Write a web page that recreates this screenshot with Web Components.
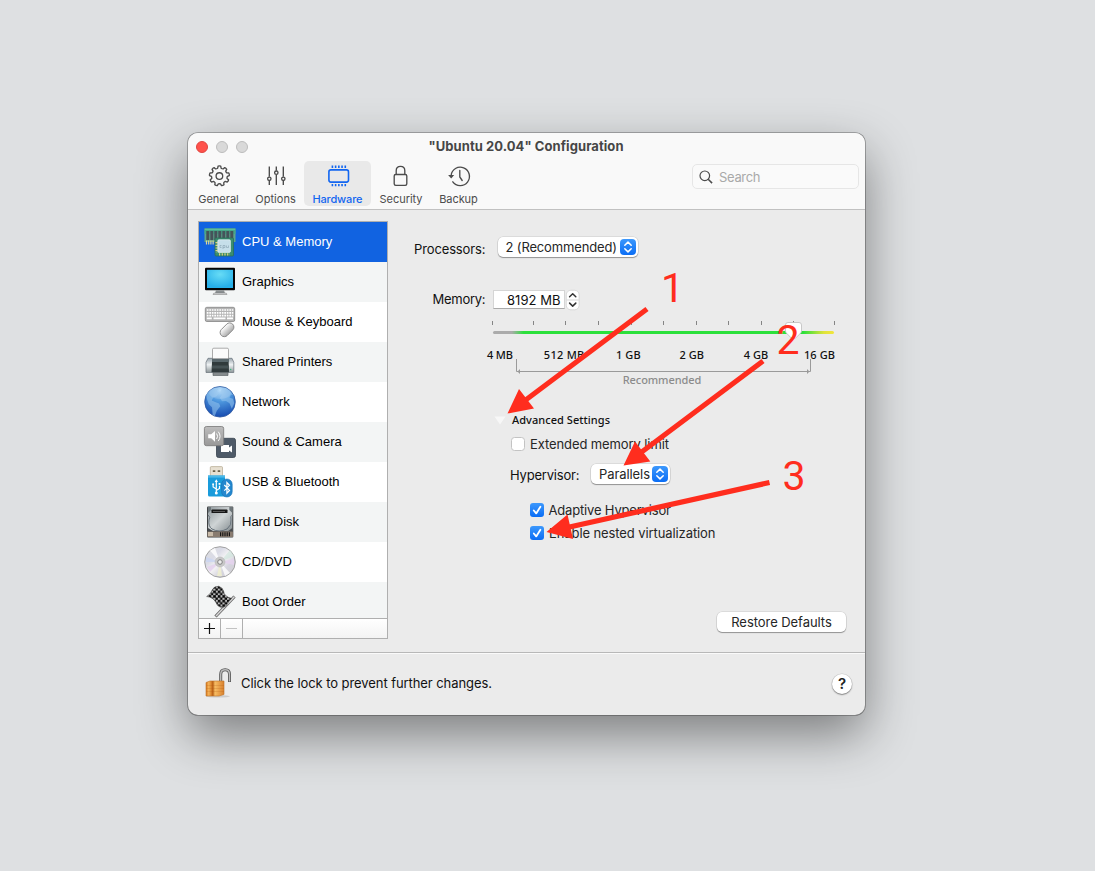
<!DOCTYPE html>
<html lang="en"><head><meta charset="utf-8"><title>"Ubuntu 20.04" Configuration</title>
<style>
html,body{margin:0;height:100%;overflow:hidden}
body{background:#dee0e2;font:13px/16px Inter,"Liberation Sans",sans-serif;color:#262626;position:relative}
</style></head><body>
<config-page></config-page>
<script>
function define(name, html, init){
  const t=document.createElement('template'); t.innerHTML=html;
  customElements.define(name, class extends HTMLElement{
    connectedCallback(){
      if(this.shadowRoot) return;
      this.attachShadow({mode:'open'}).append(t.content.cloneNode(true));
      if(init) init(this,this.shadowRoot);
    }
  });
}

const SIDE = {
cpu:`<path d="M.5 2.500h31v13.500H.5z" fill="#5fa58c"/><path d="M.5 2.500h31V8H.5z" fill="#46a687"/><path d="M3.800 5v9M7.800 5v9M11.800 5v9M15.800 5v9M19.800 5v9M23.800 5v9M27.800 5v9" stroke="#45535a" stroke-width="3"/><path d="M.8 3.300h30.400" stroke="#65c4a0"/><path d="M2.500 14.500v4M4.700 14.500v4M6.900 14.500v4M9.100 14.500v4" stroke="#dfd79b" stroke-width="1.200"/><rect x="11" y="12" width="18.500" height="18" rx="1" fill="#3b8e70" stroke="#2b6f58" stroke-width=".8"/><path d="M12.600 16v11M15 28.300h11" stroke="#e4d27c" stroke-width="2.200" stroke-dasharray="1.200 1.500"/><rect x="13.800" y="13.800" width="12.600" height="12.600" rx="1.200" fill="#c6dfea" stroke="#e5f2f7" stroke-width=".7"/><path d="M17.500 19.500H16v2h1.500M19 23v-3.500h2v2h-2M22.500 19.500v2h2v-2" fill="none" stroke="#8fabb9" stroke-width=".7"/>`,
gfx:`<defs><radialGradient id="g" cx=".5" cy=".25" r=".7"><stop offset="0" stop-color="#67dcf6"/><stop offset="1" stop-color="#27b0e9"/></radialGradient></defs><rect x="1" y="1.800" width="30" height="22.400" rx="1" fill="#050505"/><rect x="3" y="3.800" width="26" height="18.200" fill="url(#g)"/><path d="M12 24.200h8l1 3.300H11z" fill="#8b9092"/><path d="M9 28.500q0-1.500 2-1.500h10q2 0 2 1.500z" fill="#d7d9da" stroke="#777" stroke-width=".5"/>`,
kbd:`<defs><linearGradient id="m"><stop stop-color="#fff"/><stop offset="1" stop-color="#aaa"/></linearGradient></defs><rect x="1.300" y="1.300" width="29.400" height="14.200" rx="1.500" fill="#b4b4b4" stroke="#858585" stroke-width=".8"/><path d="M2.800 4h26.500M2.800 6.800h26.500M2.800 9.600h26.500" stroke="#fff" stroke-width="1.700" stroke-dasharray="1.700 .800"/><path d="M2.800 12.400h5M9.500 12.400h12M23 12.400h6" stroke="#fff" stroke-width="1.700"/><g transform="rotate(45 23 23.800)"><rect x="18.800" y="15.800" width="8.400" height="16" rx="4.200" fill="url(#m)" stroke="#848484" stroke-width=".9"/></g>`,
prn:`<defs><linearGradient id="p" y2="1" x2="0"><stop stop-color="#9aa5ad"/><stop offset=".45" stop-color="#eef2f3"/><stop offset="1" stop-color="#8d9699"/></linearGradient></defs><path d="M4 12.300h24l1.800 4v10.200H2V16.300z" fill="url(#p)" stroke="#67717a" stroke-width=".7"/><path d="M8.500 13V3.500q0-1.300 1.300-1.300h13.400q1.300 0 1.300 1.300V13z" fill="#fbfbfb" stroke="#8a8a8a" stroke-width=".7"/><path d="M8.200 12.800h16.300l.500 13.500H7.500z" fill="#303a3c"/><path d="M8 13h17v3H8z" fill="#59676c"/><path d="M8 19.500h17v3H8z" fill="#465255"/><path d="M9 26.500h15v3H9z" fill="#858b8d" stroke="#50585a" stroke-width=".6"/><circle cx="26.700" cy="23.500" r=".7" fill="#31b575"/>`,
net:`<defs><radialGradient id="n" cx=".5" cy=".12" r=".9"><stop stop-color="#a9d5f8"/><stop offset=".4" stop-color="#4f99df"/><stop offset="1" stop-color="#1448ae"/></radialGradient></defs><circle cx="16" cy="15.800" r="15.300" fill="url(#n)" stroke="#3059a0" stroke-width=".8"/><path d="M2.300 8.500Q6 3 12 1.800l2 1.300-2 2.800 3 1.200-2.500 3.500-3.300.8-1.400 3 3.300 1.700 4 1.500 1.200 2.700-3.500 4.500-2 5.200-2.100-1.200-.7-7.500-3.200-3-1.800-5zM17.500 3.500l4-1.500q5 2 7.500 7l-2-.2-1.500 3 3.500 1 1.300 4.500-2.500 5.500-2.300-5.500-3.500-2.200-4 .2-2.200-3.500 2.200-3.100-1.500-2.500z" fill="#90c2ed" opacity=".6"/><ellipse cx="16" cy="7" rx="11" ry="6" fill="#fff" opacity=".15"/>`,
snd:`<defs><linearGradient id="s" y2="1" x2="0"><stop stop-color="#bdbdbd"/><stop offset="1" stop-color="#989898"/></linearGradient></defs><rect x="12.500" y="12.300" width="19" height="19.200" rx="2" fill="#4e5a68" stroke="#36414d" stroke-width=".8"/><path d="M17 19h8v2.500l3-2v7l-3-2V26h-8z" fill="#fff"/><rect x=".4" y=".5" width="19.300" height="19.200" rx="2" fill="url(#s)" stroke="#777" stroke-width=".8"/><path d="M4.200 8.200h3L11 5v10.700l-3.800-3.500h-3z" fill="#fff"/><path d="M12.600 7.500q2 2.800 0 5.500M14.300 5.700q3.500 4.600 0 9.200" fill="none" stroke="#fff" stroke-width="1"/>`,
usb:`<rect x="6.300" y=".6" width="12.200" height="10" rx="1" fill="#e7e0d1" stroke="#a89a80" stroke-width=".6"/><path d="M8.800 4.200h2.500V6H8.800zM13.700 4.200h2.500V6h-2.500z" fill="#6a6049"/><path d="M4 9.600h17v21H5.500Q4 30.600 4 29z" fill="#199bdb"/><path d="M4 9.600h17v2H4z" fill="#4bb8e8"/><path d="M12.300 26.500V15m0 8-3.200-2v-2.600m3.200 6 3.200-2v-2.600" stroke="#fff" fill="none" stroke-width="1.200"/><path d="m10.700 16 1.600-2.700 1.600 2.700z" fill="#fff"/><circle cx="12.300" cy="27" r="1.500" fill="#fff"/><circle cx="9.100" cy="18.200" r="1" fill="#fff"/><path d="M14.600 17h1.800v1.800h-1.800z" fill="#fff"/><rect x="17.600" y="13" width="10.600" height="18" rx="5.300" fill="#2487ce" stroke="#1572b5" stroke-width=".6"/><path d="m20.300 19 5.200 5.400-2.600 2.800V16.500l2.600 2.800-5.200 5.400" fill="none" stroke="#fff" stroke-width="1.200"/>`,
hdd:`<defs><linearGradient id="h" x2="1" y2="1"><stop stop-color="#8f989c"/><stop offset=".5" stop-color="#cfd4d5"/><stop offset="1" stop-color="#848c90"/></linearGradient></defs><rect x="3" y=".4" width="26.300" height="31" rx="1" fill="#3f4244"/><path d="M4 1h24.300v24H4z" fill="url(#h)"/><path d="M4 9q3 2 1 5-1 6 3 9 7 4 15 0 5-4 4-9-1-4 1.300-5" fill="none" stroke="#66717a" stroke-width="1"/><path d="M4 1v6l3-3V1zM28.300 1v6l-3-3V1z" fill="#6d767a"/><rect x="7.500" y="3.600" width="16" height="3.400" rx=".6" fill="#171717"/><path d="M9 5.500h12" stroke="#717171" stroke-width=".7"/><path d="M4 22l5 3H4zM28.300 22l-4 3h4z" fill="#484c50"/><rect x="3.400" y="25.500" width="25.500" height="5.500" fill="#897c70"/><path d="M4 26h5v4H4z" fill="#c8bba9"/><path d="M16 28.300h10" stroke="#161616" stroke-width="4" stroke-dasharray="1.200 1"/>`,
cd:`<defs><linearGradient id="c" x2="1" y2="1"><stop stop-color="#ddd"/><stop offset=".32" stop-color="#dadbe6"/><stop offset=".5" stop-color="#f5f4f5"/><stop offset=".7" stop-color="#d5d4de"/><stop offset="1" stop-color="#cfcfcf"/></linearGradient></defs><circle cx="16" cy="16" r="15.300" fill="url(#c)" stroke="#989898" stroke-width=".9"/><path d="M16 16 6 4.500l5-2.500zM16 16l5 14 5-3z" fill="#fff" opacity=".8"/><path d="M16 16 2 11v5z" fill="#c8d4f4" opacity=".7"/><path d="M16 16 3 21l3 5z" fill="#e4cfed" opacity=".8"/><path d="m16 16 10-12 4 6z" fill="#d0e6dd" opacity=".7"/><path d="m16 16 14-3v6z" fill="#e4d3ed" opacity=".9"/><path d="M16 16 13 30h5z" fill="#eeeed0" opacity=".9"/><circle cx="16" cy="16" r="5" fill="#c8c8c8" stroke="#b2b2b2" stroke-width=".5"/><circle cx="16" cy="16" r="2.300" fill="#eee" stroke="#777" stroke-width=".9"/>`,
boot:`<defs><pattern id="k" width="4.600" height="4.600" patternUnits="userSpaceOnUse"><path d="M0 0h4.600v4.600H0z" fill="#b9b9b9"/><path d="M0 0h2.600v2.600H0zM2.300 2.300h2.600v2.600H2.300z" fill="#060606"/></pattern></defs><path d="M11.500 30.500 30.500 10.500" stroke="#686868" stroke-width="3.200"/><path d="M12 30 30.300 10.800" stroke="#d8d8d8" stroke-width="1.400"/><path d="M2.700 10.500Q7 8 8.500 3.500 10 .3 14.500.3q4 1 5 4.700.5 5.500 8 7.500-3.500 3-5 7-2.500 2.500-6.500 1.500Q13 20 12 16.500q-3-5.500-9.300-6z" fill="url(#k)" stroke="#505050" stroke-width=".7"/>`,
lock:`<defs><linearGradient id="l"><stop stop-color="#d6761c"/><stop offset=".15" stop-color="#f5b45a"/><stop offset=".28" stop-color="#dc8830"/><stop offset=".38" stop-color="#b85e14"/><stop offset=".5" stop-color="#f7bd64"/><stop offset="1" stop-color="#d8802d"/></linearGradient></defs><ellipse cx="14" cy="29.300" rx="12" ry="1.300" fill="#000" opacity=".13"/><path d="M16.700 15V7.500q0-4.700 4.500-4.700 4.300 0 4.300 4.700V15" fill="none" stroke="#555" stroke-width="3"/><path d="M16.700 15V7.500q0-4.700 4.500-4.700 4.300 0 4.300 4.700V14.500" fill="none" stroke="#bbb" stroke-width="1.400"/><path d="m2 15.500 4-1.500h14v13.500L15 29H2z" fill="url(#l)" stroke="#bd7229" stroke-width=".6"/><path d="M2.500 18.500H20M2.500 21.500H20M2.500 24.500H20" stroke="#ad5810" stroke-width=".6" opacity=".35"/>`
};
function gear(){let d='';const n=9,P=(r,a)=>(11+r*Math.cos(a)).toFixed(2)+' '+(11+r*Math.sin(a)).toFixed(2);
 for(let i=0;i<n;i++){const a=-Math.PI/2+i*2*Math.PI/n,s=2*Math.PI/n;
  d+=(i?'L':'M')+P(8,a-s*.31)+'L'+P(9.9,a-s*.19)+'Q'+P(10.3,a)+' '+P(9.9,a+s*.19)+'L'+P(8,a+s*.31)+'Q'+P(7.6,a+s*.5)+' '+P(8,a+s*.69);}
 return d+'Z';}
const TOOL = {
general:`<path d="${gear()}" stroke-linejoin="round"/><circle cx="11" cy="11" r="3.300"/>`,
options:`<path d="M4 1.500v10.300M4 15.800V20M11 1.500v4.200M11 9.700V20M18 1.500v10.300M18 15.800V20"/><circle cx="4" cy="13.800" r="1.700"/><circle cx="11" cy="7.700" r="1.700"/><circle cx="18" cy="13.800" r="1.700"/>`,
hardware:`<rect x="1.200" y="4.900" width="19.600" height="12.200" rx="2" stroke-width="1.600"/><path d="M3.900 1.800h14.500M3.900 20.100h14.500" stroke-width="2.400" stroke-dasharray="1.600 1.620"/>`,
security:`<rect x="4.700" y="9.500" width="12.600" height="10.800" rx="1.500"/><path d="M6.700 9.500V5.700Q6.700 1.400 11 1.400t4.300 4.300v3.800"/>`,
backup:`<path d="M2.600 10.500A9.200 9.200 0 1 1 4.300 16.800" stroke-linecap="round"/><path d="m-.4 10 3.100 3.500 3-3.500z" fill="currentColor" stroke="none"/><path d="M11.300 5.500v6.500l2.400 3.500" stroke-linecap="round"/>`
};

// Single line of text, tracked so it fills the width given by its "w" attribute.
define('fit-text',`<style>:host{display:inline-block;white-space:pre;flex:none}span{display:inline-block}</style><span><slot></slot></span>`,(h,r)=>{
  const w=+h.getAttribute('w'), s=r.querySelector('span'), n=h.textContent.length;
  const nat=s.getBoundingClientRect().width;
  s.style.letterSpacing=((w-nat)/(n-1)).toFixed(3)+'px'; h.style.width=w+'px';
});

define('side-icon',`<style>:host{display:block;width:32px;height:32px;flex:none}svg{display:block;overflow:visible}</style><svg width="32" height="32" viewBox="0 0 32 32"></svg>`,
 (h,r)=>{const n=h.getAttribute('name'); if(n) r.querySelector('svg').innerHTML=SIDE[n]});

define('tool-tab',`<style>:host{display:flex;flex-direction:column;align-items:center;height:45px;border-radius:5px;color:#4c4c4c;font-size:11px}
:host([active]){background:#e9e9e9;color:#1266f1;font-weight:500}
svg{display:block;margin:4px 0 4px;fill:none;stroke:currentColor;stroke-width:1.350;overflow:visible;transform:translateX(var(--dx,.3px))}fit-text{line-height:14px}</style>
<svg width="22" height="22"></svg><slot></slot>`,(h,r)=>{r.querySelector('svg').innerHTML=TOOL[h.getAttribute('icon')];h.style.width=h.getAttribute('w')+'px'});

define('search-field',`<style>:host{display:flex;align-items:center;box-sizing:border-box;width:167px;height:25px;border:1px solid #e6e6e6;border-radius:5px;background:#fafafa;color:#a9a9a9;padding-left:6px}svg{margin-right:6px;stroke:#4b4b4b;fill:none}</style>
<svg width="14" height="14"><circle cx="5.800" cy="5.800" r="4.800" stroke-width="1.200"/><path d="m9.200 9.200 3.900 3.900" stroke-width="1.500"/></svg><fit-text w="41.500">Search</fit-text>`);

define('window-header',`<style>:host{display:block;height:76px;background:#f9f9f9;border-bottom:1px solid #c1c1c1}
.bar{display:grid;grid-template-columns:80px 1fr 80px;height:27px;align-items:center}.lights{display:flex;gap:8px;padding-left:8px;padding-top:1px}i{width:12px;height:12px;border-radius:50%;background:#d9d9d9;box-sizing:border-box;border:1px solid #bcbcbc}i:first-child{background:#ff524b;border-color:#df4540}
.title{font-weight:700;color:#464646;text-align:center;padding:0 1px 2px 0}.tools{display:flex;height:45px;margin-top:1px;padding-left:2px}search-field{margin:3px 6px 0 auto}</style>
<div class="bar"><div class="lights"><i></i><i></i><i></i></div><div class="title"><fit-text w="195">"Ubuntu 20.04" Configuration</fit-text></div></div>
<div class="tools"><tool-tab icon="general" w="57" style="--dx:.4px"><fit-text w="40.500">General</fit-text></tool-tab><tool-tab icon="options" w="57"><fit-text w="40.500">Options</fit-text></tool-tab><tool-tab icon="hardware" w="67" active style="--dx:.7px"><fit-text w="50">Hardware</fit-text></tool-tab><tool-tab icon="security" w="60" style="--dx:-.5px"><fit-text w="43">Security</fit-text></tool-tab><tool-tab icon="backup" w="55" style="--dx:.5px"><fit-text w="38.500">Backup</fit-text></tool-tab><search-field></search-field></div>`);

define('side-row',`<style>:host{display:flex;align-items:center;height:40px;padding-left:5px;gap:6px;flex:none;color:#000;font-family:"Liberation Sans",Arial,sans-serif;background:#fff}:host(:nth-child(even)){background:#f3f5f5}:host([selected]){background:#1163e1;color:#fff}span{padding-bottom:1px}</style><side-icon></side-icon><span><slot></slot></span>`,
 (h,r)=>{const i=document.createElement('side-icon');i.setAttribute('name',h.getAttribute('icon'));r.querySelector('side-icon').replaceWith(i)});

define('hardware-list',`<style>:host{display:flex;flex-direction:column;box-sizing:border-box;width:190px;height:418px;border:1px solid #afafaf;background:#fff}
.rows{height:396px;overflow:hidden;display:flex;flex-direction:column}.foot{display:grid;grid-template-columns:22px 22px 1fr;height:19px;border-top:1px solid #afafaf;background:linear-gradient(#fff,#f3f3f3)}.foot div{border-right:1px solid #afafaf;display:grid;place-items:center}svg{display:block}</style>
<div class="rows"><side-row icon="cpu" selected>CPU &amp; Memory</side-row><side-row icon="gfx">Graphics</side-row><side-row icon="kbd">Mouse &amp; Keyboard</side-row><side-row icon="prn">Shared Printers</side-row><side-row icon="net">Network</side-row><side-row icon="snd">Sound &amp; Camera</side-row><side-row icon="usb">USB &amp; Bluetooth</side-row><side-row icon="hdd">Hard Disk</side-row><side-row icon="cd">CD/DVD</side-row><side-row icon="boot">Boot Order</side-row></div>
<div class="foot"><div><svg width="11" height="11"><path d="M0 5.500h11M5.500 0v11" stroke="#111" stroke-width="1.200"/></svg></div><div><svg width="11" height="11"><path d="M0 5.500h11" stroke="#c2c2c2"/></svg></div></div>`);

define('pop-up',`<style>:host{display:flex;box-sizing:border-box;align-items:center;justify-content:space-between;height:20px;border-radius:5px;background:#fff;box-shadow:0 0 0 .5px #0002,0 1px 1px #0005;padding:0 2px 0 9px;flex:none}svg{display:block}</style><slot></slot><svg width="16" height="16"><defs><linearGradient id="b" x2="0" y2="1"><stop stop-color="#3c98fc"/><stop offset="1" stop-color="#0a6df5"/></linearGradient></defs><rect width="16" height="16" rx="4" fill="url(#b)"/><path d="m4.800 6.300 3.200-3.200 3.200 3.200M4.800 9.700 8 12.900l3.200-3.200" fill="none" stroke="#fff" stroke-width="1.500" stroke-linecap="round" stroke-linejoin="round"/></svg>`);

define('number-field',`<style>:host{display:flex;align-items:center}.f{width:72px;height:19px;box-sizing:border-box;border:1px solid #d5d5d5;border-bottom-color:#aaa;background:#fff;color:#111;display:flex;justify-content:flex-end;align-items:center;padding-right:3.500px;padding-top:1px}svg{display:block;margin-left:1px;overflow:visible}</style><div class="f"><slot></slot></div>
<svg width="13" height="20"><rect x=".3" y=".3" width="12.800" height="19.500" rx="4.500" fill="#fff" stroke="#cfcfcf" stroke-width=".7"/><path d="M.5 10h12.300" stroke="#d7d7d7"/><path d="M3.600 6.700 6.700 3.700l3.100 3M3.600 13.100l3.100 3 3.100-3" fill="none" stroke="#333" stroke-width="1.500" stroke-linecap="round" stroke-linejoin="round"/></svg>`);

define('memory-slider',`<style>:host{display:block;width:352px;font:11px/14px "Noto Sans","Open Sans",sans-serif;font-weight:500;color:#111}svg{display:block;overflow:visible}.labels{display:flex;justify-content:space-between;padding:0 3px 0 1px;height:13px}.rec{display:flex;justify-content:center;color:#8b8b8b}.br{margin-top:-3px}</style>
<svg width="352" height="27"><defs><linearGradient id="t"><stop stop-color="#ababab"/><stop offset=".055" stop-color="#ababab"/><stop offset=".09" stop-color="#2be03b"/><stop offset=".91" stop-color="#2be03b"/><stop offset=".97" stop-color="#dfe33b"/><stop offset="1" stop-color="#f2e63d"/></linearGradient></defs><path stroke="#858585" d="M6.500 0v4M47.500 0v4M79.500 0v4M112.500 0v4M145.500 0v4M177.500 0v4M210.500 0v4M242.500 0v4M275.500 0v4M307.500 0v4M348.500 0v4"/><rect x="7" y="10" width="341" height="3" rx="1.500" fill="url(#t)"/><path d="M302 1.500h11q2.500 0 2.500 2.500v6q0 1.200-1 2.200l-5 5q-2 1.500-4 0l-5-5q-1-1-1-2.200V4q0-2.500 2.500-2.500z" fill="#fff" stroke="#bdbdbd" stroke-width=".8"/></svg>
<div class="labels"><fit-text w="26">4 MB</fit-text><fit-text w="40.500" style="margin-left:5px">512 MB</fit-text><fit-text w="24.500" style="margin-left:6px">1 GB</fit-text><fit-text w="24.500" style="margin-left:13px">2 GB</fit-text><fit-text w="24.500" style="margin-left:14px">4 GB</fit-text><fit-text w="31" style="margin-left:10px">16 GB</fit-text></div>
<svg class="br" width="352" height="15"><path d="M30.500 1v12.500h294V1" stroke="#9a9a9a" fill="none"/><path d="m31.500 13.500 2.500-2.500v5zM323.500 13.500 321 11v5z" fill="#9a9a9a"/></svg>
<div class="rec"><fit-text w="78.500">Recommended</fit-text></div>`);

define('check-box',`<style>:host{display:flex;align-items:center;gap:5px;color:#262626}svg{display:block;overflow:visible}.on{display:none}:host([checked]) .on{display:block}:host([checked]) .off{display:none}</style>
<svg class="off" width="14" height="14"><rect x=".5" y=".5" width="13" height="13" rx="3" fill="#fff" stroke="#c3c3c3"/></svg><svg class="on" width="14" height="14"><defs><linearGradient id="b" x2="0" y2="1"><stop stop-color="#3c98fc"/><stop offset="1" stop-color="#0a6df5"/></linearGradient></defs><rect width="14" height="14" rx="3" fill="url(#b)"/><path d="m3.800 7.500 2.400 2.900 4.200-6.700" fill="none" stroke="#fff" stroke-width="1.800" stroke-linecap="round" stroke-linejoin="round"/></svg><slot></slot>`);

define('push-button',`<style>:host{display:flex;align-items:center;justify-content:center;box-sizing:border-box;width:129px;height:20px;padding-bottom:1px;border-radius:5px;background:#fff;box-shadow:0 0 0 .5px #0002,0 1px 1px #0005}</style><slot></slot>`);

define('hardware-form',`<style>:host{display:flex;flex-direction:column;width:477px;height:442px}.r{display:flex;align-items:center;flex:none}.r>fit-text{color:#111}
.adv{font:500 11px/14px "Noto Sans","Open Sans",sans-serif;color:#111;display:flex;align-items:center;padding-left:106px;margin-top:26px;gap:6px}</style>
<div class="r" style="padding:27px 0 0 26px;height:20px"><fit-text w="71.500" style="margin-top:3px">Processors:</fit-text><pop-up style="width:140px;margin-left:12px;padding-left:8px"><fit-text w="111.500">2 (Recommended)</fit-text></pop-up></div>
<div class="r" style="padding:32.500px 0 0 44.500px;height:20px"><fit-text w="53" style="margin-top:-1px">Memory:</fit-text><number-field style="margin-left:7.500px"><fit-text w="53.500" style="margin-top:-1px">8192 MB</fit-text></number-field></div>
<memory-slider style="margin:11.500px 0 0 98px"></memory-slider>
<div class="adv"><svg width="12" height="9"><path d="M.5.500h11L6 8.500z" fill="#f7f7f7"/></svg><fit-text w="98">Advanced Settings</fit-text></div>
<check-box style="margin:9px 0 0 123px"><fit-text w="139">Extended memory limit</fit-text></check-box>
<div class="r" style="padding:12px 0 0 122px;height:20px"><fit-text w="69.500" style="margin-top:1px">Hypervisor:</fit-text><pop-up style="width:79px;margin-left:11.500px;padding-left:8px"><fit-text w="51">Parallels</fit-text></pop-up></div>
<check-box checked style="margin:18px 0 0 142px;gap:4.500px"><fit-text w="122.500">Adaptive Hypervisor</fit-text></check-box>
<check-box checked style="margin:7px 0 0 142px"><fit-text w="166.500">Enable nested virtualization</fit-text></check-box>
<push-button style="margin:auto 19px 20px auto"><fit-text w="100.500">Restore Defaults</fit-text></push-button>`);

define('lock-footer',`<style>:host{display:flex;align-items:center;box-sizing:border-box;height:63px;border-top:1px solid #b8b8b8;box-shadow:inset 0 1px #fafafa;color:#111;padding:0 13px 0 16px}side-icon{margin:0 5px 2px 0}fit-text{margin-bottom:2px}b{margin-left:auto;width:20px;height:20px;border-radius:50%;background:#fff;box-shadow:0 0 0 .5px #0002,0 1px 1.500px #0006;font:600 15px/20px Inter,sans-serif;text-align:center;color:#222}</style><side-icon name="lock"></side-icon><fit-text w="251">Click the lock to prevent further changes.</fit-text><b>?</b>`);

define('config-window',`<style>:host{display:flex;flex-direction:column;width:677px;height:582px;border-radius:10px;background:#ebebeb;overflow:hidden;box-shadow:0 0 0 .8px #0005,0 20px 50px rgba(0,0,0,.44)}.main{display:flex;height:442px}hardware-list{margin:11px 0 0 10px}</style><window-header></window-header><div class="main"><hardware-list></hardware-list><hardware-form></hardware-form></div><lock-footer></lock-footer>`);

define('callout-arrows',`<style>:host{position:absolute;inset:0;pointer-events:none}svg{display:block}text{font:41px Roboto,"Liberation Sans",sans-serif;fill:#ff2d1e}</style><svg width="1095" height="871"><g stroke="#ff2d1e" stroke-width="5.200"><path d="M647 309 523 402M763 361 641 452.500M769.500 482.500 565 528"/></g><path d="m507.500 413.500 11.500-24.500 15 19.500zM623.500 465.500l11.500-24 15.300 20zM546.500 532l21-17.500 5.500 24.500z" fill="#ff2d1e"/><text x="661" y="302">1</text><text x="776.500" y="354.200">2</text><text x="782.500" y="490">3</text></svg>`);

define('config-page',`<style>:host{display:block;height:871px}config-window{margin:133px 0 0 188px}.wrap{display:flow-root}</style><div class="wrap"><config-window></config-window></div><callout-arrows></callout-arrows>`);
</script></body></html>
